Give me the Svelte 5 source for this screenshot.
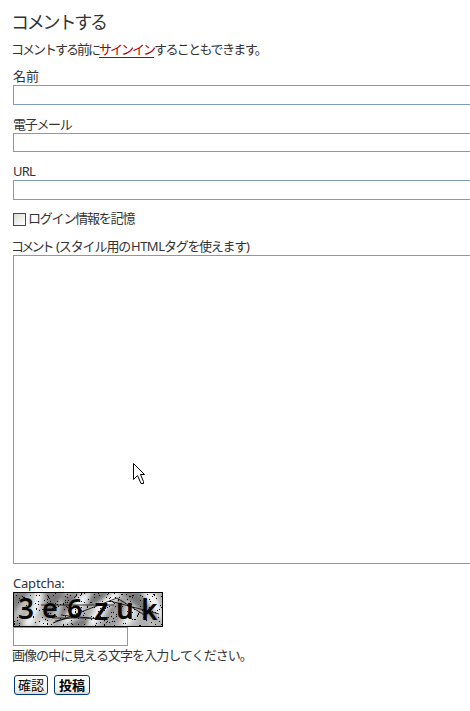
<script>
  let author = $state('');
  let email = $state('');
  let url = $state('');
  let remember = $state(false);
  let text = $state('');
  let captcha = $state('');

  const glyphs = [
    { ch: '3', x: 5, y: 27, size: 28 },
    { ch: 'e', x: 29, y: 26, size: 27 },
    { ch: '6', x: 54, y: 26, size: 27 },
    { ch: 'z', x: 81, y: 28, size: 30 },
    { ch: 'u', x: 103, y: 27, size: 28 },
    { ch: 'k', x: 128, y: 28, size: 28 },
  ];

  // small seeded generator so the speckles stay put between renders
  function makeDots(count, seed) {
    let s = seed;
    const next = () => (s = (s * 16807) % 2147483647) / 2147483647;
    let d = '';
    for (let i = 0; i < count; i++) {
      d += `M${1 + Math.floor(next() * 148)} ${1 + Math.floor(next() * 33)}h1v1h-1z`;
    }
    return d;
  }

  const dots = makeDots(260, 4711);
</script>

<form class="comment-form" onsubmit={(e) => e.preventDefault()}>
  <h2>コメントする</h2>
  <p class="intro"><span class="lead">コメントする前に</span><a href="#signin">サインイン</a><span class="tail">することもできます。</span></p>

  <div class="field">
    <label for="author">名前</label>
    <input id="author" type="text" bind:value={author} />
  </div>
  <div class="field short">
    <label for="email" class="l-mail">電子メール</label>
    <input id="email" type="text" bind:value={email} />
  </div>
  <div class="field">
    <label for="url" class="l-url">URL</label>
    <input id="url" type="text" bind:value={url} />
  </div>

  <div class="remember">
    <input id="remember" type="checkbox" bind:checked={remember} />
    <label for="remember">ログイン情報を記憶</label>
  </div>

  <div class="comment">
    <label for="text"><span class="l-comment">コメント</span><span class="l-style">(スタイル用の</span><span class="l-html">HTML</span><span class="l-tags">タグを使えます)</span></label>
    <textarea id="text" bind:value={text}></textarea>
  </div>

  <div class="captcha">
    <label for="captcha" class="l-captcha">Captcha:</label>
    <svg width="150" height="35" viewBox="0 0 150 35" role="img" aria-label="Captcha">
      <defs>
        <filter id="soft" x="-50%" y="-50%" width="200%" height="200%">
          <feGaussianBlur stdDeviation="2.2" />
        </filter>
        <clipPath id="frame"><rect width="150" height="35" /></clipPath>
      </defs>
      <g clip-path="url(#frame)">
        <rect width="150" height="35" fill="#b0b0b0" />
        <g filter="url(#soft)">
          <path class="dark" d="M0 0H17L6 12L0 24ZM30 0H52L43 15L34 29L28 22L34 10ZM50 5L66 0L55 19L46 30ZM76 0H101L92 10L74 14ZM108 0H128L134 12L147 27L138 28L121 12ZM0 29L12 32V35H0ZM59 30L78 24L72 35H57ZM101 12L111 7L109 20L97 35H89Z" />
          <path class="light" d="M22 0H30L27 14L19 34H9L18 18ZM66 4L79 0L70 16L55 31L47 34ZM100 0H108L101 11L86 20L78 18ZM129 0H142L149 20V30L138 14ZM115 12L123 18L116 34H107L113 24ZM28 27L39 31L35 35H24ZM78 22L94 17L82 34H75Z" />
          <path class="streak" d="M20 35L32 17M40 31L49 8M60 28L75 7M94 33L106 15M120 33L126 19M4 23L18 3M141 35L136 22" />
        </g>
      </g>
      <path class="dots" d={dots} />
      {#each glyphs as g}
        <text x={g.x} y={g.y} font-size={g.size}>{g.ch}</text>
      {/each}
      <path class="scratch" d="M28 13H101M40 31L104 6M39 26H78M48 23L85 27M97 9L146 22M104 6L133 24M42 29L66 24" />
      <rect class="edge" x="0.5" y="0.5" width="149" height="34" />
    </svg>
    <input id="captcha" type="text" bind:value={captcha} />
    <p class="hint">画像の中に見える文字を入力してください。</p>
  </div>

  <div class="buttons">
    <button type="button">確認</button>
    <button type="submit" class="post">投稿</button>
  </div>

  <svg class="cursor" width="13" height="22" viewBox="0 0 13 22">
    <path d="M0.5 0.5V16.5L4.5 12.5L8 20.5H10.5V18.5L7.5 11.5H11.5Z" />
  </svg>
</form>

<style>
  :global(body) {
    margin: 0;
    background: #fff;
  }

  .comment-form {
    position: relative;
    box-sizing: border-box;
    width: 100%;
    height: 711px;
    padding: 10px 0 0 13px;
    color: #333;
    font-family: 'Noto Sans', 'Noto Sans CJK JP', sans-serif;
    font-size: 13px;
    line-height: 18px;
    white-space: nowrap;
  }

  h2 {
    margin: 0 0 6px -2px;
    font-size: 18px;
    font-weight: 400;
    line-height: 24px;
    letter-spacing: -2.2px;
  }

  p {
    margin: 0;
  }

  .intro {
    display: flex;
    margin: 0 0 9px -2px;
  }

  .lead {
    width: 88px;
    letter-spacing: -2px;
  }

  a {
    box-sizing: border-box;
    width: 55px;
    height: 18px;
    border-bottom: 1px solid #a00;
    color: #a00;
    letter-spacing: -2px;
    text-decoration: none;
  }

  .tail {
    letter-spacing: -1.6px;
  }

  label {
    display: block;
    height: 18px;
  }

  input,
  textarea {
    display: block;
    box-sizing: border-box;
    margin: 0;
    padding: 2px;
    border: 1px solid #7f9db9;
    border-radius: 0;
    outline: 0;
    background: #fff;
    font: inherit;
  }

  .field {
    margin-bottom: 10px;
  }

  .field input {
    width: 100%;
    height: 20px;
    border-right: 0;
  }

  .field.short input {
    height: 19px;
  }

  .l-mail {
    letter-spacing: -1.3px;
  }

  .l-url {
    letter-spacing: -0.8px;
  }

  .remember {
    display: flex;
    align-items: center;
    gap: 2px;
    height: 18px;
    margin-bottom: 9px;
    letter-spacing: -1.2px;
  }

  .remember label {
    margin-top: -2px;
  }

  .remember input {
    appearance: none;
    width: 13px;
    height: 13px;
    padding: 0;
    border-color: #1c5180;
    background: linear-gradient(135deg, #dcdcd7, #fff);
  }

  .comment label {
    display: flex;
    margin-left: -2px;
  }

  .l-comment {
    width: 45px;
    letter-spacing: -2.8px;
  }

  .l-style {
    width: 75px;
    letter-spacing: -1.1px;
  }

  .l-html {
    width: 33px;
    letter-spacing: -0.5px;
  }

  .l-tags {
    letter-spacing: -1.3px;
  }

  textarea {
    width: 100%;
    height: 309px;
    border-right: 0;
    resize: none;
  }

  .captcha {
    margin-top: 10px;
  }

  .l-captcha {
    letter-spacing: -0.2px;
  }

  .captcha svg {
    display: block;
    overflow: visible;
  }

  .captcha text {
    fill: #080808;
    font-family: 'Noto Sans', sans-serif;
    font-weight: 600;
  }

  .dark {
    fill: #777;
  }

  .light {
    fill: #f4f4f4;
  }

  .streak {
    fill: none;
    stroke: #ddd;
    stroke-width: 2;
  }

  .dots {
    fill: #000;
    shape-rendering: crispEdges;
  }

  .scratch,
  .edge {
    fill: none;
    stroke: #000;
    stroke-width: 1;
  }

  .scratch {
    stroke-width: 0.8;
  }

  .captcha input {
    width: 115px;
    height: 19px;
  }

  .hint {
    margin-left: -1px;
    letter-spacing: -0.95px;
  }

  .buttons {
    display: flex;
    gap: 6px;
    padding: 11px 0 0 1px;
  }

  button {
    box-sizing: border-box;
    width: 34px;
    height: 20px;
    padding: 0;
    border: 1px solid #003c74;
    border-radius: 3px;
    background: linear-gradient(#fff, #f3f2ed 80%, #dcd6cb);
    color: #000;
    font: inherit;
    line-height: 17px;
  }

  .post {
    width: 36px;
    font-weight: 700;
  }

  .cursor {
    position: absolute;
    top: 463px;
    left: 133px;
  }

  .cursor path {
    fill: #fff;
    stroke: #000;
  }
</style>
